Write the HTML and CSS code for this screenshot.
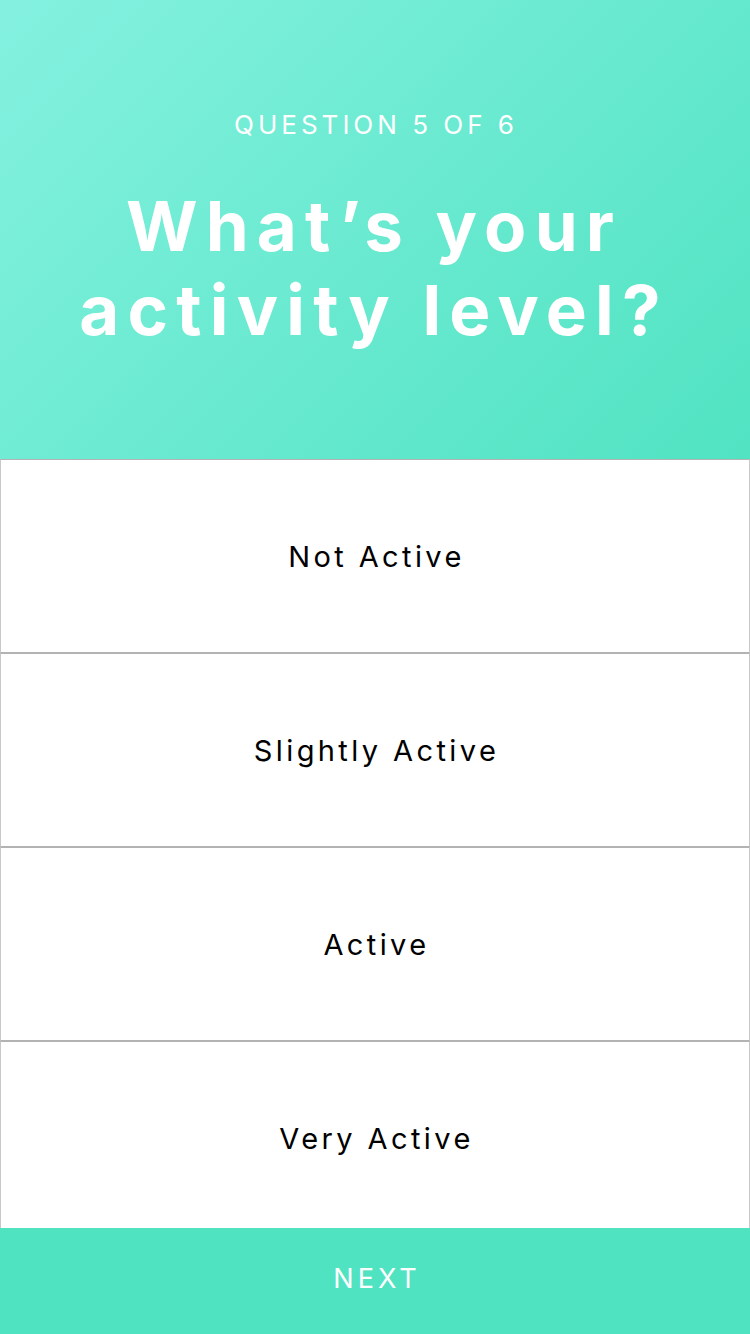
FILE: index.html
```html
<!DOCTYPE html>
<html lang="en">
<head>
<meta charset="utf-8">
<title>Question 5 of 6</title>
<link rel="stylesheet" href="styles.css">
</head>
<body>
<div class="screen">
  <header class="hero">
    <div class="step">QUESTION 5 OF 6</div>
    <h1 class="title">What’s your<br>activity level?</h1>
  </header>
  <ul class="options">
    <li class="option">Not Active</li>
    <li class="option">Slightly Active</li>
    <li class="option">Active</li>
    <li class="option">Very Active</li>
  </ul>
  <footer class="next">NEXT</footer>
</div>
</body>
</html>
```

FILE: styles.css
```css
* { box-sizing: border-box; }
html, body { margin: 0; padding: 0; }
body {
  font-family: Inter, "Liberation Sans", sans-serif;
  background: #fff;
}
.screen {
  width: 750px;
  height: 1334px;
  display: flex;
  flex-direction: column;
  overflow: hidden;
}
.hero {
  height: 459px;
  flex: none;
  background: linear-gradient(135deg, #84f1df 0%, #50e3c2 100%);
  color: #fff;
  text-align: center;
  padding-top: 109px;
}
.step {
  font-size: 26px;
  letter-spacing: 4px;
  line-height: 32px;
  font-weight: 400;
  padding-left: 2px;
}
.title {
  margin: 43px 0 0;
  font-size: 69px;
  font-weight: 700;
  letter-spacing: 8.2px;
  line-height: 84px;
  padding-right: 2px;
}
.options {
  list-style: none;
  margin: 0;
  padding: 0;
  flex: 1;
  min-height: 0;
  overflow: hidden;
  display: flex;
  flex-direction: column;
}
.option {
  flex: none;
  height: 194px;
  border: 1px solid #b3b3b3;
  border-left-color: #c8c8c8;
  border-right-color: #c8c8c8;
  display: flex;
  align-items: center;
  justify-content: center;
  font-size: 29px;
  letter-spacing: 3.4px;
  padding-left: 3px;
  color: #000;
}
.next {
  flex: none;
  height: 106px;
  background: #50e3c2;
  color: #fff;
  display: flex;
  align-items: center;
  justify-content: center;
  font-size: 27px;
  letter-spacing: 4px;
  padding: 0 0 5px 4px;
}
```
